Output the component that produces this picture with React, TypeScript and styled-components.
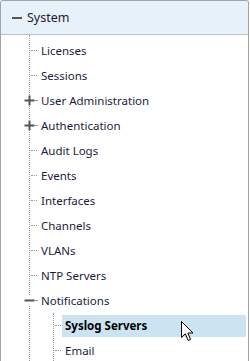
import styled, { createGlobalStyle } from 'styled-components';

type Item = { label: string; toggle?: 'plus' | 'minus'; selected?: boolean; children?: Item[] };

const items: Item[] = [
  { label: 'Licenses' },
  { label: 'Sessions' },
  { label: 'User Administration', toggle: 'plus' },
  { label: 'Authentication', toggle: 'plus' },
  { label: 'Audit Logs' },
  { label: 'Events' },
  { label: 'Interfaces' },
  { label: 'Channels' },
  { label: 'VLANs' },
  { label: 'NTP Servers' },
  {
    label: 'Notifications',
    toggle: 'minus',
    children: [{ label: 'Syslog Servers', selected: true }, { label: 'Email' }],
  },
];

const GlobalStyle = createGlobalStyle`
  body {
    margin: 0;
    background: #ffffff;
    font-family: "Noto Sans", "Open Sans", sans-serif;
  }
`;

const Toggle = ({ kind }: { kind: 'plus' | 'minus' }) => (
  <ToggleBox>
    <svg width="11" height="11" viewBox="0 0 11 11">
      <rect x="0.5" y="4.5" width="10" height="2" fill="#555" />
      {kind === 'plus' && <rect x="4.5" y="0.5" width="2" height="10" fill="#555" />}
    </svg>
  </ToggleBox>
);

const Tree = ({ nodes, nested }: { nodes: Item[]; nested?: boolean }) => (
  <List $nested={nested}>
    {nodes.map((n) => (
      <Node key={n.label}>
        <Row>
          {n.toggle ? <Toggle kind={n.toggle} /> : null}
          <Connector $short={!!n.toggle} />
          <Label $selected={n.selected}>{n.label}</Label>
        </Row>
        {n.children && <Tree nodes={n.children} nested />}
      </Node>
    ))}
  </List>
);

const App = () => {
  return (
    <>
      <GlobalStyle />
      <Panel>
        <Header>
          <HeaderIcon />
          <HeaderTitle>System</HeaderTitle>
        </Header>
        <Body>
          <Tree nodes={items} />
        </Body>
        <Cursor width="13" height="21" viewBox="0 0 13 21">
          <path
            d="M0.5 0.5 L0.5 16.5 L4.3 12.8 L7.2 19.5 L9.6 18.4 L6.8 12 L12 12 Z"
            fill="#fff"
            stroke="#000"
            strokeWidth="1"
            strokeLinejoin="miter"
          />
        </Cursor>
      </Panel>
    </>
  );
};

const Panel = styled.div`
  position: relative;
  width: 247px;
  height: 361px;
  border: 1px solid #a3a3a3;
  border-bottom: none;
  border-radius: 3px 3px 0 0;
  overflow: hidden;
  background: #ffffff;
`;

const Header = styled.div`
  height: 33px;
  display: flex;
  align-items: center;
  padding-left: 11px;
  background: #e7f1f9;
  border-bottom: 1px solid #b3c2ce;
`;

const HeaderIcon = styled.span`
  width: 10px;
  height: 2px;
  background: #555555;
  margin-right: 5px;
`;

const HeaderTitle = styled.span`
  font-size: 12.5px;
  color: #1c1c2e;
`;

const Body = styled.div`
  padding-right: 2px;
`;

const List = styled.ul<{ $nested?: boolean }>`
  list-style: none;
  margin: 0 0 0 ${({ $nested }) => ($nested ? '23px' : '28px')};
  padding: ${({ $nested }) => ($nested ? '0' : '3px 0 0')};
  border-left: 1px dotted #9a9a9a;
`;

const Node = styled.li`
  margin: 0;
  padding: 0;
`;

const Row = styled.div`
  height: 25px;
  display: flex;
  align-items: center;
`;

const ToggleBox = styled.span`
  display: flex;
  width: 11px;
  height: 11px;
  margin-left: -6px;
  background: #ffffff;
`;

const Connector = styled.span<{ $short?: boolean }>`
  width: ${({ $short }) => ($short ? '2px' : '6px')};
  margin-left: ${({ $short }) => ($short ? '0' : '1px')};
  height: 0;
  border-top: 1px dotted #9a9a9a;
`;

const Label = styled.span<{ $selected?: boolean }>`
  flex: ${({ $selected }) => ($selected ? 1 : '0 0 auto')};
  height: 22px;
  line-height: 21px;
  margin-left: 1px;
  padding-left: 3px;
  font-size: 11.5px;
  font-weight: ${({ $selected }) => ($selected ? 700 : 400)};
  color: ${({ $selected }) => ($selected ? '#000000' : '#1c1c3a')};
  background: ${({ $selected }) => ($selected ? '#cce3f2' : 'transparent')};
  white-space: nowrap;
`;

const Cursor = styled.svg`
  position: absolute;
  left: 180px;
  top: 320px;
`;

export default App;
